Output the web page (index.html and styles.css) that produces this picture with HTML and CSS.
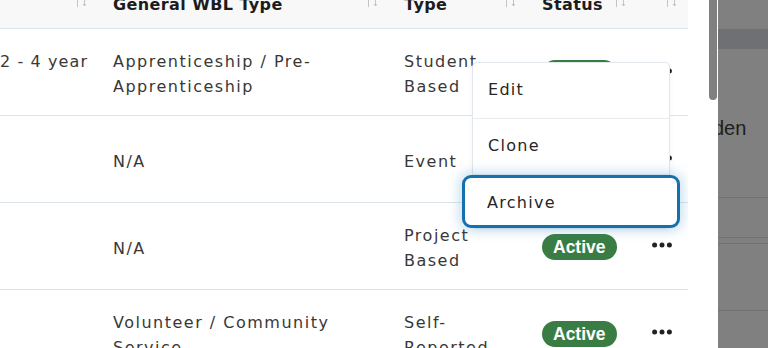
FILE: index.html
```html
<!DOCTYPE html>
<html lang="en">
<head>
  <meta charset="UTF-8">
  <title>Work-Based Learning</title>
  <link rel="stylesheet" href="styles.css">
</head>
<body>

  <div class="screen">
    <div class="drawer">
      <div class="table-area">
        <div class="table">
          <div class="row head">
            <div class="cell first"><span></span><svg class="sort" width="10" height="16" viewBox="0 0 10 16"><path d="M1.5 15V2M0 4l1.5-2L3 4M8.5 1v13M7 12l1.5 2 1.5-2"/></svg></div>
            <div class="cell"><span>General WBL Type</span><svg class="sort" width="10" height="16" viewBox="0 0 10 16"><path d="M1.5 15V2M0 4l1.5-2L3 4M8.5 1v13M7 12l1.5 2 1.5-2"/></svg></div>
            <div class="cell"><span>Type</span><svg class="sort" width="10" height="16" viewBox="0 0 10 16"><path d="M1.5 15V2M0 4l1.5-2L3 4M8.5 1v13M7 12l1.5 2 1.5-2"/></svg></div>
            <div class="cell"><span>Status</span><svg class="sort" width="10" height="16" viewBox="0 0 10 16"><path d="M1.5 15V2M0 4l1.5-2L3 4M8.5 1v13M7 12l1.5 2 1.5-2"/></svg></div>
            <div class="cell"><span></span><svg class="sort" width="10" height="16" viewBox="0 0 10 16"><path d="M1.5 15V2M0 4l1.5-2L3 4M8.5 1v13M7 12l1.5 2 1.5-2"/></svg></div>
          </div>

          <div class="row">
            <div class="cell first top">2 - 4 year</div>
            <div class="cell">Apprenticeship / Pre-Apprenticeship</div>
            <div class="cell">Student Based</div>
            <div class="cell"><span class="badge">Active</span></div>
            <div class="cell"><svg class="dots" width="20" height="6" viewBox="0 0 20 6"><circle cx="2.6" cy="3" r="2.5"/><circle cx="10" cy="3" r="2.5"/><circle cx="17.4" cy="3" r="2.5"/></svg></div>
          </div>

          <div class="row">
            <div class="cell first"></div>
            <div class="cell">N/A</div>
            <div class="cell">Event</div>
            <div class="cell"><span class="badge">Active</span></div>
            <div class="cell"><svg class="dots" width="20" height="6" viewBox="0 0 20 6"><circle cx="2.6" cy="3" r="2.5"/><circle cx="10" cy="3" r="2.5"/><circle cx="17.4" cy="3" r="2.5"/></svg></div>
          </div>

          <div class="row">
            <div class="cell first"></div>
            <div class="cell">N/A</div>
            <div class="cell">Project Based</div>
            <div class="cell"><span class="badge">Active</span></div>
            <div class="cell"><svg class="dots" width="20" height="6" viewBox="0 0 20 6"><circle cx="2.6" cy="3" r="2.5"/><circle cx="10" cy="3" r="2.5"/><circle cx="17.4" cy="3" r="2.5"/></svg></div>
          </div>

          <div class="row">
            <div class="cell first"></div>
            <div class="cell">Volunteer / Community Service</div>
            <div class="cell">Self-Reported</div>
            <div class="cell"><span class="badge">Active</span></div>
            <div class="cell"><svg class="dots" width="20" height="6" viewBox="0 0 20 6"><circle cx="2.6" cy="3" r="2.5"/><circle cx="10" cy="3" r="2.5"/><circle cx="17.4" cy="3" r="2.5"/></svg></div>
          </div>
        </div>

        <div class="menu">
          <div class="menu-item">Edit</div>
          <div class="menu-item">Clone</div>
          <div class="menu-item focused">Archive</div>
        </div>
      </div>

      <div class="scrollbar">
        <div class="thumb"></div>
      </div>
    </div>

    <div class="backdrop">
      <div class="band"></div>
      <div class="behind-text">den</div>
      <div class="line first-line"></div>
      <div class="line second-line"></div>
      <div class="line third-line"></div>
      <div class="line fourth-line"></div>
    </div>
  </div>

</body>
</html>
```

FILE: styles.css
```css
body {
  margin: 0;
  background-color: #ffffff;
  font-family: "DejaVu Sans", sans-serif;
  color: #383838;
}

.screen {
  display: flex;
  width: 768px;
  height: 348px;
  overflow: hidden;
}

.drawer {
  display: flex;
  width: 718px;
  flex-shrink: 0;
  background-color: #ffffff;
}

.table-area {
  position: relative;
  width: 688px;
  overflow: hidden;
}

.table {
  margin-top: -20px;
  width: 688px;
}

.row {
  display: grid;
  grid-template-columns: 98px 291px 138px 110px 51px;
  align-items: center;
  box-sizing: border-box;
  min-height: 87px;
  padding: 20px 0 16px;
  border-bottom: 1px solid #dde4ea;
  font-size: 16px;
  line-height: 25px;
  letter-spacing: 1.5px;
}

.row.head {
  min-height: 49px;
  padding: 0;
  background-color: #f8f8f8;
  font-weight: bold;
  color: #1c1c1c;
  letter-spacing: 0.4px;
}

.cell {
  padding: 0 12px 0 15px;
}

.cell.first {
  padding-left: 0;
  white-space: nowrap;
  letter-spacing: 1.1px;
}

.cell.top {
  align-self: start;
}

.head .cell {
  display: flex;
  align-items: center;
  justify-content: space-between;
  height: 48px;
}

.sort {
  flex-shrink: 0;
  margin-bottom: 8px;
  fill: none;
  stroke: #c4c4c4;
  stroke-width: 1;
}

.badge {
  display: inline-block;
  height: 26px;
  margin-bottom: 2px;
  padding: 0 11px;
  border-radius: 13px;
  background-color: #3a7d44;
  color: #ffffff;
  font-family: "Liberation Sans", Arial, sans-serif;
  font-weight: bold;
  font-size: 17.5px;
  line-height: 26px;
  letter-spacing: 0;
  vertical-align: middle;
}

.dots {
  display: block;
  margin-bottom: 6px;
  fill: #222222;
}

.menu {
  position: absolute;
  left: 472px;
  top: 62px;
  width: 196px;
  background-color: #ffffff;
  border: 1px solid #e1e7ec;
  border-radius: 5px;
  box-shadow: 0 2px 6px rgba(0, 0, 0, 0.04);
  font-size: 16px;
  line-height: 25px;
  letter-spacing: 1.3px;
  color: #262626;
}

.menu-item {
  height: 56px;
  box-sizing: border-box;
  padding: 14px 15px 17px;
  border-bottom: 1px solid #e7ecef;
}

.menu-item.focused {
  height: 53px;
  margin: 0 -11px;
  padding: 12px 22px 0;
  border: 3px solid #1670ae;
  border-radius: 9px;
  background-color: #ffffff;
  box-shadow: 0 0 12px 3px rgba(40, 130, 200, 0.25);
}

.scrollbar {
  width: 30px;
  flex-shrink: 0;
}

.thumb {
  width: 8px;
  height: 100px;
  margin-left: 21px;
  border-radius: 0 0 4px 4px;
  background-color: #808080;
}

.backdrop {
  flex: 1;
  overflow: hidden;
  background-color: #808080;
}

.band {
  height: 20px;
  margin-top: 29px;
  background-color: #6f7073;
}

.behind-text {
  margin: 67px 0 0 -5px;
  font-family: "Liberation Sans", Arial, sans-serif;
  font-size: 20px;
  line-height: 24px;
  color: #1e1e1e;
}

.line {
  height: 1px;
  background-color: #727272;
}

.first-line {
  margin-top: 57px;
}

.second-line {
  margin-top: 39px;
}

.third-line {
  margin-top: 5px;
}

.fourth-line {
  margin-top: 66px;
}
```
